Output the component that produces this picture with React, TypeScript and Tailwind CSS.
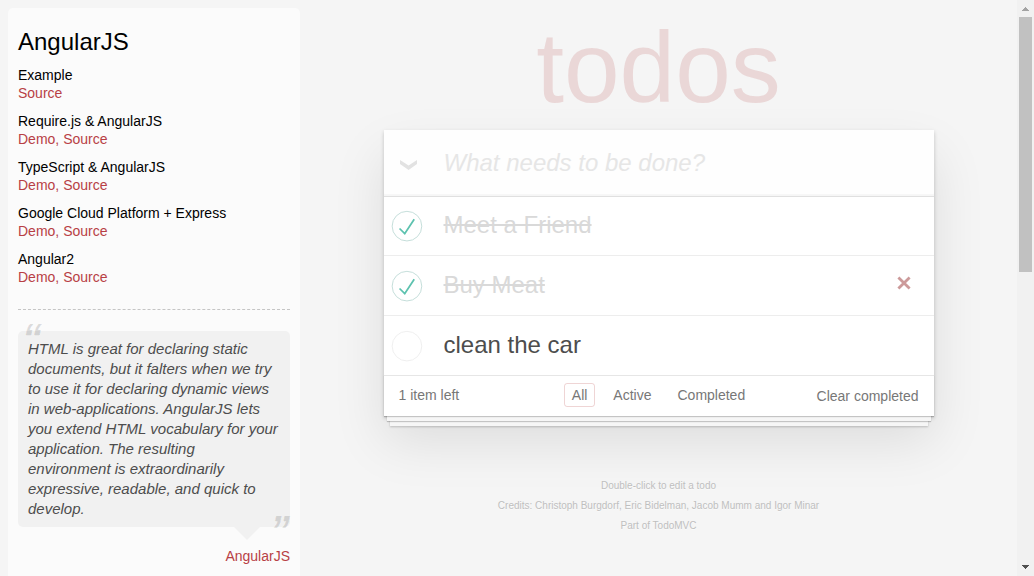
import { useState } from "react";
import clsx from "clsx";

type Todo = { id: number; title: string; done: boolean };
type Filter = "All" | "Active" | "Completed";

const filters: Filter[] = ["All", "Active", "Completed"];

const examples = [
  { title: "Example", links: ["Source"] },
  { title: "Require.js & AngularJS", links: ["Demo", "Source"] },
  { title: "TypeScript & AngularJS", links: ["Demo", "Source"] },
  { title: "Google Cloud Platform + Express", links: ["Demo", "Source"] },
  { title: "Angular2", links: ["Demo", "Source"] },
];

function Sidebar() {
  return (
    <aside className="ml-2 mt-2 w-[292px] shrink-0 rounded-t-[5px] bg-[#fbfbfb] p-2.5 text-sm leading-[18px] text-black">
      <h3 className="text-2xl leading-[48px]">AngularJS</h3>
      <ul className="flex flex-col gap-2.5">
        {examples.map((example) => (
          <li key={example.title}>
            <h4>{example.title}</h4>
            <p className="text-[#b83f45]">
              {example.links.map((link, i) => (
                <span key={link}>
                  {i > 0 && ", "}
                  <a href="#" className="hover:underline">{link}</a>
                </span>
              ))}
            </p>
          </li>
        ))}
      </ul>
      <hr className="mb-[21px] mt-[23px] border-t border-dashed border-[#c5c5c5]" />
      <blockquote className="relative rounded-[5px] bg-[#f1f1f1] px-2.5 py-2 text-[15px] italic leading-5 text-[#4d4d4d]">
        <span aria-hidden="true" className="absolute -top-[18px] left-1 text-[40px] font-bold leading-[50px] text-black/12">“</span>
        <p>
          HTML is great for declaring static documents, but it falters when we try to use it for declaring dynamic views
          in web-applications. AngularJS lets you extend HTML vocabulary for your application. The resulting environment
          is extraordinarily expressive, readable, and quick to develop.
        </p>
        <span aria-hidden="true" className="absolute -bottom-7 right-0 text-[40px] font-bold leading-[50px] text-black/12">”</span>
        <span className="absolute right-[30px] top-full border-x-[13px] border-t-[13px] border-x-transparent border-t-[#f1f1f1]" />
      </blockquote>
      <p className="mt-5 text-right">
        <a href="#" className="text-[#b83f45] hover:underline">AngularJS</a>
      </p>
    </aside>
  );
}

function Toggle({ todo, onToggle }: { todo: Todo; onToggle: () => void }) {
  return (
    <span className="relative size-10 shrink-0">
      <input
        id={`todo-${todo.id}`}
        type="checkbox"
        checked={todo.done}
        onChange={onToggle}
        className="absolute inset-0 size-10 cursor-pointer opacity-0"
      />
      <svg className="pointer-events-none size-10" viewBox="-10 -18 100 135" fill="none" aria-hidden="true">
        <circle cx="50" cy="50" r="50" stroke={todo.done ? "#bddad5" : "#ededed"} strokeWidth="3" />
        {todo.done && <path fill="#5dc2af" d="M72 25L42 71 27 56l-4 4 20 20 34-52z" />}
      </svg>
    </span>
  );
}

function ScrollTrack() {
  return (
    <div aria-hidden="true" className="flex w-[17px] shrink-0 flex-col items-center bg-[#f1f1f1]">
      <svg className="size-[17px] shrink-0" viewBox="0 0 17 17" shapeRendering="crispEdges">
        <path fill="#a3a3a3" d="M8 7h1v1h1v1h1v1h1v1H5v-1h1V9h1V8h1z" />
      </svg>
      <div className="h-[255px] w-[13px] bg-[#c1c1c1]" />
      <svg className="mt-auto size-[17px] shrink-0" viewBox="0 0 17 17" shapeRendering="crispEdges">
        <path fill="#505050" d="M5 6h7v1h-1v1h-1v1H9v1H8V9H7V8H6V7H5z" />
      </svg>
    </div>
  );
}

export default function App() {
  const [todos, setTodos] = useState<Todo[]>([
    { id: 1, title: "Meet a Friend", done: true },
    { id: 2, title: "Buy Meat", done: true },
    { id: 3, title: "clean the car", done: false },
  ]);
  const [filter, setFilter] = useState<Filter>("All");
  const [hovered, setHovered] = useState(2);
  const [draft, setDraft] = useState("");

  const left = todos.filter((t) => !t.done).length;
  const visible = todos.filter((t) => filter === "All" || t.done === (filter === "Completed"));

  return (
    <div className="flex h-screen overflow-hidden bg-[#f5f5f5] font-['Liberation_Sans',Arial,sans-serif] text-[#4d4d4d]">
      <Sidebar />
      <main className="flex min-w-0 flex-1 flex-col items-center">
        <h1 className="mb-[13px] pt-[17px] text-[100px] leading-[100px] text-[rgba(175,47,47,0.15)]">todos</h1>
        <section className="w-full max-w-[550px] bg-white shadow-[0_2px_4px_0_rgba(0,0,0,0.2),0_25px_50px_0_rgba(0,0,0,0.1)]">
          <form
            className="flex h-[66px] items-center bg-[#fefefe] shadow-[inset_0_-2px_1px_rgba(0,0,0,0.03)]"
            onSubmit={(e) => {
              e.preventDefault();
              if (!draft.trim()) return;
              setTodos([...todos, { id: Date.now(), title: draft.trim(), done: false }]);
              setDraft("");
            }}
          >
            <button
              type="button"
              aria-label="Mark all as complete"
              className="flex h-full w-[60px] items-center pl-4 pt-1"
              onClick={() => setTodos(todos.map((t) => ({ ...t, done: left > 0 })))}
            >
              <svg className="h-2.5 w-[17px]" viewBox="0 0 17 10" aria-hidden="true">
                <path fill="#e2e2e2" d="M0 0L8.6 5.4 17 0V4L8.6 10 0 4z" />
              </svg>
            </button>
            <input
              aria-label="New todo"
              placeholder="What needs to be done?"
              value={draft}
              onChange={(e) => setDraft(e.target.value)}
              className="h-full min-w-0 flex-1 bg-transparent text-2xl outline-none placeholder:italic placeholder:text-[#e6e6e6]"
            />
          </form>
          <ul className="divide-y divide-[#ededed] border-t border-[#e0e0e0]">
            {visible.map((todo) => (
              <li
                key={todo.id}
                className="flex h-[60px] items-center first:h-[59px] last:h-[59px]"
                onMouseEnter={() => setHovered(todo.id)}
              >
                <Toggle
                  todo={todo}
                  onToggle={() => setTodos(todos.map((t) => (t.id === todo.id ? { ...t, done: !t.done } : t)))}
                />
                <label
                  htmlFor={`todo-${todo.id}`}
                  className={clsx("pb-0.5 pl-5 text-2xl", todo.done && "text-[#d9d9d9] line-through")}
                >
                  {todo.title}
                </label>
                {hovered === todo.id && (
                  <button
                    aria-label={`Delete ${todo.title}`}
                    className="mb-1.5 ml-auto mr-2.5 flex size-10 items-center justify-center text-[#cc9a9a]"
                    onClick={() => setTodos(todos.filter((t) => t.id !== todo.id))}
                  >
                    <svg className="size-3.5" viewBox="0 0 14 14" fill="none" stroke="currentColor" strokeWidth="2.8" aria-hidden="true">
                      <path d="M1.4 1.4L12.6 12.6M12.6 1.4L1.4 12.6" />
                    </svg>
                  </button>
                )}
              </li>
            ))}
          </ul>
          <footer className="grid h-[41px] grid-cols-[1fr_auto_1fr] items-start border-t border-[#e6e6e6] px-[15px] pt-[7px] text-sm text-[#777] shadow-[0_1px_1px_rgba(0,0,0,0.2),0_8px_0_-3px_#f6f6f6,0_9px_1px_-3px_rgba(0,0,0,0.2),0_16px_0_-6px_#f6f6f6,0_17px_2px_-6px_rgba(0,0,0,0.2)]">
            <span className="leading-6">{left} item left</span>
            <nav className="flex gap-2.5">
              {filters.map((name) => (
                <a
                  key={name}
                  href="#"
                  onClick={() => setFilter(name)}
                  className={clsx(
                    "rounded-[3px] border px-[7px] leading-[22px]",
                    name === filter ? "border-[rgba(175,47,47,0.2)]" : "border-transparent",
                  )}
                >
                  {name}
                </a>
              ))}
            </nav>
            <button className="justify-self-end leading-[26px]" onClick={() => setTodos(todos.filter((t) => !t.done))}>
              Clear completed
            </button>
          </footer>
        </section>
        <footer className="mt-[60px] text-center text-[10px] leading-5 text-[#bfbfbf] [text-shadow:0_1px_0_rgba(255,255,255,0.5)]">
          <p>Double-click to edit a todo</p>
          <p>
            Credits: <a href="#">Christoph Burgdorf</a>, <a href="#">Eric Bidelman</a>, <a href="#">Jacob Mumm</a> and{" "}
            <a href="#">Igor Minar</a>
          </p>
          <p>
            Part of <a href="#">TodoMVC</a>
          </p>
        </footer>
      </main>
      <ScrollTrack />
    </div>
  );
}
